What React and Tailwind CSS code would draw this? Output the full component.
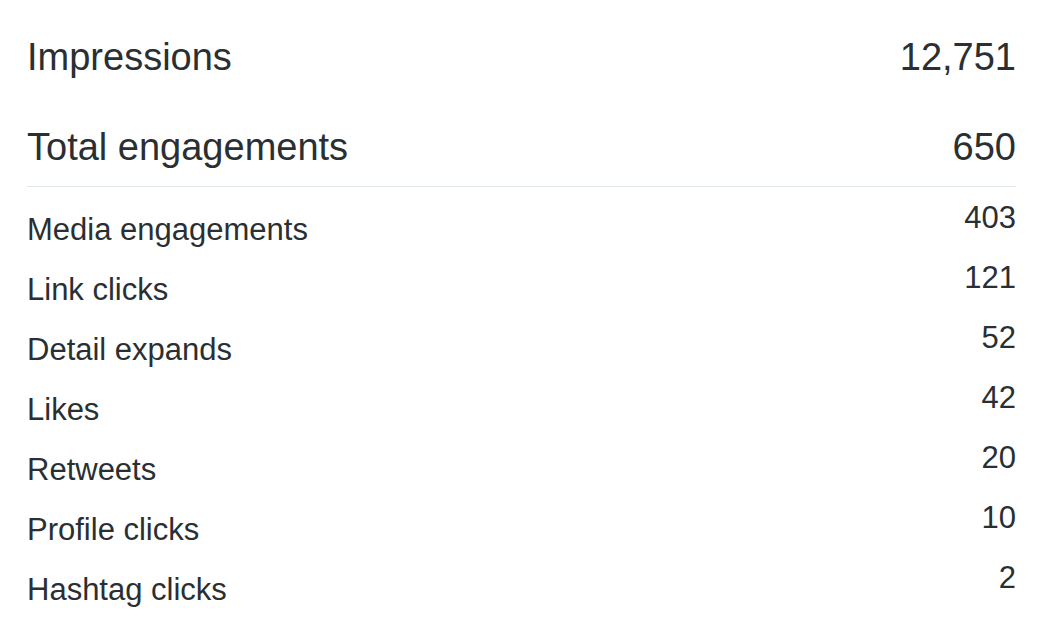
import React from 'react';

const totals = [
  { label: 'Impressions', value: '12,751' },
  { label: 'Total engagements', value: '650' },
];

const rows = [
  { label: 'Media engagements', value: '403' },
  { label: 'Link clicks', value: '121' },
  { label: 'Detail expands', value: '52' },
  { label: 'Likes', value: '42' },
  { label: 'Retweets', value: '20' },
  { label: 'Profile clicks', value: '10' },
  { label: 'Hashtag clicks', value: '2' },
];

const App = () => {
  return (
    <div
      className="w-[1050px] h-[634px] bg-white text-[#292f33] pl-[27px] pr-[34px] overflow-hidden"
      style={{ fontFamily: '"Liberation Sans", Arial, sans-serif' }}
    >
      {/* Totals */}
      <div className="pt-[34px] pb-[16px] border-b border-[#e1e8ed]">
        {totals.map((t, i) => (
          <div
            key={t.label}
            className={`flex justify-between text-[38px] leading-[46px] font-light ${i > 0 ? 'mt-[44px]' : ''}`}
          >
            <span>{t.label}</span>
            <span>{t.value}</span>
          </div>
        ))}
      </div>

      {/* Engagement breakdown */}
      <ul className="pt-[13px]">
        {rows.map((r) => (
          <li key={r.label} className="flex items-start justify-between text-[31px]">
            <span className="leading-[60px]">{r.label}</span>
            <span className="leading-[36px]">{r.value}</span>
          </li>
        ))}
      </ul>
    </div>
  );
};

export default App;
